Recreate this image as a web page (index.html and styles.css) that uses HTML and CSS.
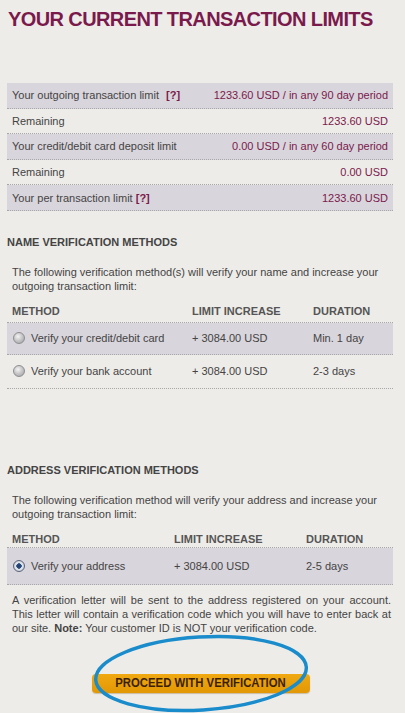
FILE: index.html
```
<!DOCTYPE html>
<html>
<head>
<meta charset="utf-8">
<link rel="stylesheet" href="styles.css">
</head>
<body>
<div class="page">
  <h1 class="title">YOUR CURRENT TRANSACTION LIMITS</h1>

  <div class="limits">
    <div class="lrow shade"><span class="lab">Your outgoing transaction limit <b class="q wide">[?]</b></span><span class="val">1233.60 USD / in any 90 day period</span></div>
    <div class="lrow"><span class="lab">Remaining</span><span class="val">1233.60 USD</span></div>
    <div class="lrow shade"><span class="lab">Your credit/debit card deposit limit</span><span class="val">0.00 USD / in any 60 day period</span></div>
    <div class="lrow"><span class="lab">Remaining</span><span class="val">0.00 USD</span></div>
    <div class="lrow shade"><span class="lab">Your per transaction limit <b class="q">[?]</b></span><span class="val">1233.60 USD</span></div>
  </div>

  <h2 class="sec sec-name">NAME VERIFICATION METHODS</h2>
  <p class="intro">The following verification method(s) will verify your name and increase your outgoing transaction limit:</p>
  <div class="methods m-name">
    <div class="mhead"><span>METHOD</span><span>LIMIT INCREASE</span><span>DURATION</span></div>
    <div class="mrow shade"><span class="mcell"><span class="radio"></span>Verify your credit/debit card</span><span>+ 3084.00 USD</span><span>Min. 1 day</span></div>
    <div class="mrow tall"><span class="mcell"><span class="radio"></span>Verify your bank account</span><span>+ 3084.00 USD</span><span>2-3 days</span></div>
  </div>

  <h2 class="sec sec-addr">ADDRESS VERIFICATION METHODS</h2>
  <p class="intro">The following verification method will verify your address and increase your outgoing transaction limit:</p>
  <div class="methods m-addr">
    <div class="mhead short"><span>METHOD</span><span>LIMIT INCREASE</span><span>DURATION</span></div>
    <div class="mrow shade big"><span class="mcell"><span class="radio on"></span>Verify your address</span><span>+ 3084.00 USD</span><span>2-5 days</span></div>
  </div>

  <p class="note">A verification letter will be sent to the address registered on your account. This letter will contain a verification code which you will have to enter back at our site. <b>Note:</b> Your customer ID is NOT your verification code.</p>

  <div class="actions">
    <span class="btn"><span class="btn-text">PROCEED WITH VERIFICATION</span></span>
  </div>
</div>

<svg class="circle" width="405" height="713" viewBox="0 0 405 713" aria-hidden="true">
  <ellipse cx="201" cy="673.5" rx="105.5" ry="36.5" transform="rotate(-3.5 201 673.5)" fill="none" stroke="#1a8ccb" stroke-width="3.4"/>
</svg>
</body>
</html>
```

FILE: styles.css
```
html, body {
  margin: 0;
  padding: 0;
  overflow: hidden;
}
body {
  background: #eeece9;
  font-family: "Liberation Sans", Arial, sans-serif;
  font-size: 11px;
  line-height: 14px;
  color: #444;
  width: 405px;
  height: 713px;
  position: relative;
}
.page {
  padding: 0 12px 0 7px;
}
.title {
  margin: 7px 0 0 1px;
  font-size: 20px;
  line-height: 24px;
  letter-spacing: -0.6px;
  font-weight: bold;
  color: #7a1a4c;
}
.limits {
  margin-top: 52px;
}
.lrow {
  display: flex;
  justify-content: space-between;
  align-items: center;
  height: 24.6px;
  padding: 0 5px;
  border-bottom: 1px dotted #a8a6a8;
}
.shade {
  background: #d9d5dc;
}
.val {
  color: #7a1a4c;
}
.q {
  color: #7a1a4c;
}
.q.wide {
  margin-left: 4px;
}
.sec {
  margin: 0;
  font-size: 11px;
  line-height: 14px;
  font-weight: bold;
  color: #444;
}
.sec-name {
  margin-top: 24px;
}
.sec-addr {
  margin-top: 74px;
}
.intro {
  margin: 16.5px 0 0;
  padding-left: 5px;
}
.methods {
  margin-top: 10.5px;
}
.mhead, .mrow {
  display: grid;
  align-items: center;
  padding-left: 5px;
  border-bottom: 1px dotted #a8a6a8;
}
.m-name .mhead, .m-name .mrow {
  grid-template-columns: 180px 121px 1fr;
}
.m-addr .mhead, .m-addr .mrow {
  grid-template-columns: 162px 132px 1fr;
}
.mhead {
  height: 18px;
  align-items: start;
  font-weight: bold;
  color: #555;
}
.mhead.short {
  height: 15px;
}
.mrow {
  height: 31px;
}
.mrow.tall {
  height: 33px;
}
.mrow.big {
  height: 36px;
}
.mcell {
  display: flex;
  align-items: center;
}
.radio {
  width: 10px;
  height: 10px;
  margin: 0 6px 0 1px;
  border-radius: 50%;
  border: 1px solid #8e8e90;
  background: radial-gradient(circle at 40% 35%, #f4f4f4 0, #c9c9cb 45%, #9d9da1 100%);
  box-sizing: content-box;
  flex: none;
}
.radio.on {
  background: radial-gradient(circle at 50% 50%, #1e3a66 0, #2d4f82 35%, #e8ecf2 42%, #aeb4bf 100%);
  border-color: #5a6478;
}
.note {
  margin: 8.5px 0 0;
  padding: 0 2px 0 5px;
  text-align: justify;
}
.actions {
  display: flex;
  margin-top: 38.5px;
  padding-left: 85px;
}
.btn {
  display: flex;
  align-items: center;
  justify-content: center;
  width: 218px;
  height: 19px;
  border-radius: 4px;
  background: linear-gradient(#f0a911, #e29705);
  box-shadow: 0 1px 1px rgba(120, 80, 0, 0.3);
}
.btn-text {
  display: inline-block;
  font-size: 13.5px;
  font-weight: bold;
  color: #3b1f02;
  transform: scaleX(0.84);
  white-space: nowrap;
}
.circle {
  position: absolute;
  left: 0;
  top: 0;
  pointer-events: none;
}
```
